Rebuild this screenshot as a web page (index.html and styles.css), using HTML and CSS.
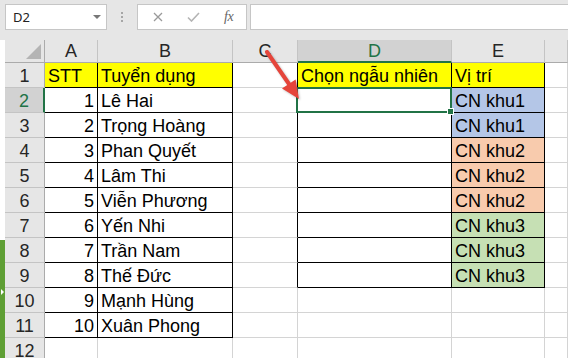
FILE: index.html
```html
<!DOCTYPE html>
<html>
<head>
<meta charset="utf-8">
<link rel="stylesheet" href="styles.css">
</head>
<body>
<div class="app">
  <div class="fbar">
    <div class="namebox"><span class="nb-text">D2</span><span class="nb-arrow"></span></div>
    <div class="dots"><i></i><i></i><i></i></div>
    <div class="fbtns">
      <svg class="ic-x" width="10" height="10" viewBox="0 0 10 10"><path d="M1 1L9 9M9 1L1 9" stroke="#9a9a9a" stroke-width="1.3" fill="none"/></svg>
      <svg class="ic-ok" width="13" height="10" viewBox="0 0 13 10"><path d="M1 5.5L4.5 9L12 1" stroke="#b4b4b4" stroke-width="1.6" fill="none"/></svg>
      <span class="fx">fx</span>
    </div>
    <div class="finput"></div>
  </div>
  <div class="main">
    <div class="edge"><div class="edge-top"></div><div class="edge-green"><span class="edge-tri"></span></div></div>
    <div class="sheet">
      <div class="ch corner"><span class="tri"></span></div>
      <div class="ch">A</div>
      <div class="ch">B</div>
      <div class="ch">C</div>
      <div class="ch sel">D</div>
      <div class="ch">E</div>
      <div class="ch"></div>

      <div class="rh">1</div>
      <div class="c bl yel">STT</div>
      <div class="c bl yel">Tuyển dụng</div>
      <div class="c brk"></div>
      <div class="c bl yel">Chọn ngẫu nhiên</div>
      <div class="c bl yel">Vị trí</div>
      <div class="c"></div>

      <div class="rh rsel">2</div>
      <div class="c bl num">1</div>
      <div class="c bl">Lê Hai</div>
      <div class="c brk"></div>
      <div class="c bl active"><span class="selbox"><span class="handle"></span></span></div>
      <div class="c bl blue">CN khu1</div>
      <div class="c"></div>

      <div class="rh">3</div>
      <div class="c bl num">2</div>
      <div class="c bl">Trọng Hoàng</div>
      <div class="c brk"></div>
      <div class="c bl"></div>
      <div class="c bl blue">CN khu1</div>
      <div class="c"></div>

      <div class="rh">4</div>
      <div class="c bl num">3</div>
      <div class="c bl">Phan Quyết</div>
      <div class="c brk"></div>
      <div class="c bl"></div>
      <div class="c bl orange">CN khu2</div>
      <div class="c"></div>

      <div class="rh">5</div>
      <div class="c bl num">4</div>
      <div class="c bl">Lâm Thi</div>
      <div class="c brk"></div>
      <div class="c bl"></div>
      <div class="c bl orange">CN khu2</div>
      <div class="c"></div>

      <div class="rh">6</div>
      <div class="c bl num">5</div>
      <div class="c bl">Viễn Phương</div>
      <div class="c brk"></div>
      <div class="c bl"></div>
      <div class="c bl orange">CN khu2</div>
      <div class="c"></div>

      <div class="rh">7</div>
      <div class="c bl num">6</div>
      <div class="c bl">Yến Nhi</div>
      <div class="c brk"></div>
      <div class="c bl"></div>
      <div class="c bl green">CN khu3</div>
      <div class="c"></div>

      <div class="rh">8</div>
      <div class="c bl num">7</div>
      <div class="c bl">Trần Nam</div>
      <div class="c brk"></div>
      <div class="c bl"></div>
      <div class="c bl green">CN khu3</div>
      <div class="c"></div>

      <div class="rh">9</div>
      <div class="c bl num">8</div>
      <div class="c bl">Thế Đức</div>
      <div class="c brk"></div>
      <div class="c bl"></div>
      <div class="c bl green">CN khu3</div>
      <div class="c"></div>

      <div class="rh">10</div>
      <div class="c bl num">9</div>
      <div class="c bl">Mạnh Hùng</div>
      <div class="c"></div>
      <div class="c"></div>
      <div class="c"></div>
      <div class="c"></div>

      <div class="rh">11</div>
      <div class="c bl num">10</div>
      <div class="c bl">Xuân Phong</div>
      <div class="c"></div>
      <div class="c"></div>
      <div class="c"></div>
      <div class="c"></div>

      <div class="rh">12</div>
      <div class="c"></div>
      <div class="c"></div>
      <div class="c"></div>
      <div class="c"></div>
      <div class="c"></div>
      <div class="c"></div>
    </div>
  </div>
  <svg class="arrow" width="568" height="358" viewBox="0 0 568 358">
    <line x1="267" y1="52" x2="289" y2="84" stroke="#e5453b" stroke-width="4" stroke-linecap="round"/>
    <polygon points="299,99 282,88.6 295.6,79.4" fill="#e5453b"/>
  </svg>
</div>
</body>
</html>
```

FILE: styles.css
```css
* { box-sizing: border-box; }
html, body { margin: 0; padding: 0; }
body {
  width: 568px;
  height: 358px;
  overflow: hidden;
  background: #fff;
  font-family: "Liberation Sans", Arial, sans-serif;
}
.app {
  position: relative;
  width: 568px;
  height: 358px;
  overflow: hidden;
}
.fbar {
  height: 40px;
  background: #e6e6e6;
  display: flex;
  align-items: flex-start;
  padding: 4px 0 0 5px;
}
.namebox {
  width: 102px;
  height: 26px;
  background: #fff;
  border: 1px solid #c6c6c6;
  display: flex;
  align-items: center;
  justify-content: space-between;
  padding: 0 5px 0 7px;
}
.nb-text {
  font-family: "Noto Sans", "Liberation Sans", sans-serif;
  font-size: 13px;
  color: #222;
}
.nb-arrow {
  width: 0;
  height: 0;
  border-left: 4px solid transparent;
  border-right: 4px solid transparent;
  border-top: 4px solid #777;
}
.dots {
  width: 30px;
  height: 26px;
  display: flex;
  flex-direction: column;
  align-items: center;
  justify-content: center;
  gap: 2px;
}
.dots i {
  display: block;
  width: 2px;
  height: 2px;
  background: #a6a6a6;
}
.fbtns {
  width: 110px;
  height: 26px;
  background: #fff;
  border: 1px solid #c6c6c6;
  display: flex;
  align-items: center;
  padding-left: 15px;
}
.ic-x { margin-right: 24px; }
.ic-ok { margin-right: 24px; }
.fx {
  font-family: "Liberation Serif", serif;
  font-style: italic;
  font-size: 14px;
  color: #666;
  letter-spacing: -0.5px;
}
.finput {
  flex: 1;
  height: 26px;
  margin-left: 3px;
  background: #fff;
  border: 1px solid #c6c6c6;
  border-right: none;
}
.main {
  display: flex;
  height: 318px;
}
.edge {
  width: 5px;
  display: flex;
  flex-direction: column;
}
.edge-top { height: 200px; background: #fff; }
.edge-green {
  flex: 1;
  background: #5f9f35;
  display: flex;
  align-items: flex-start;
  padding-top: 49px;
}
.edge-tri {
  width: 0;
  height: 0;
  border-top: 3px solid transparent;
  border-bottom: 3px solid transparent;
  border-left: 3px solid #fff;
  margin-left: 1px;
}
.sheet {
  flex: 1;
  display: grid;
  grid-template-columns: 40px 53px 135px 65px 154px 93px 1fr;
  grid-template-rows: 23px;
  grid-auto-rows: 25px;
  font-size: 18px;
  color: #000;
}
.ch {
  background: #e6e6e6;
  border-right: 1px solid #c4c4c4;
  border-bottom: 1px solid #ababab;
  text-align: center;
  line-height: 23px;
  color: #262626;
}
.ch.sel {
  background: #d2d2d2;
  color: #217346;
  border-bottom: 2px solid #217346;
}
.corner {
  display: flex;
  align-items: flex-end;
  justify-content: flex-end;
  padding: 0 3px 3px 0;
  border-right: 1px solid #ababab;
}
.tri {
  width: 0;
  height: 0;
  border-left: 15px solid transparent;
  border-bottom: 15px solid #b4b4b4;
}
.rh {
  background: #e6e6e6;
  border-right: 1px solid #ababab;
  border-bottom: 1px solid #c4c4c4;
  text-align: center;
  line-height: 25px;
  padding-top: 1px;
  color: #262626;
}
.rh.rsel {
  background: #d2d2d2;
  color: #217346;
  border-right: 2px solid #217346;
}
.c {
  border-right: 1px solid #d4d4d4;
  border-bottom: 1px solid #d4d4d4;
  line-height: 24px;
  padding: 1px 3px 0 3px;
  white-space: nowrap;
  overflow: visible;
}
.c.bl {
  border-right-color: #000;
  border-bottom-color: #000;
}
.c.brk { border-right-color: #000; }
.num { text-align: right; }
.yel { background: #ffff00; }
.blue { background: #b4c6e7; }
.orange { background: #f8cbad; }
.green { background: #c6e0b4; }
.active { position: relative; }
.selbox {
  position: absolute;
  left: -2px;
  top: -1px;
  right: -1px;
  bottom: -1px;
  border: 2px solid #217346;
}
.handle {
  position: absolute;
  right: -4px;
  bottom: -4px;
  width: 7px;
  height: 7px;
  background: #217346;
  border: 1px solid #fff;
}
.arrow {
  position: absolute;
  left: 0;
  top: 0;
  pointer-events: none;
  filter: drop-shadow(1px 1px 1px rgba(0,0,0,0.25));
}
```
